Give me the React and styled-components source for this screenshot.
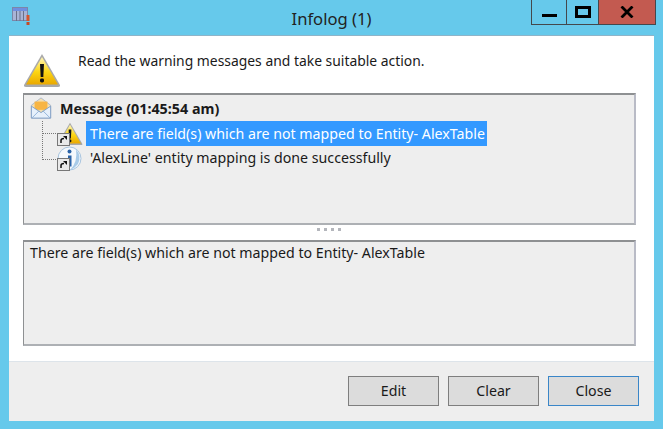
import React from "react";
import styled, { createGlobalStyle } from "styled-components";

const GlobalStyle = createGlobalStyle`
  html, body {
    margin: 0;
    padding: 0;
    background: #66c9eb;
  }
  body {
    font-family: "Noto Sans", "Open Sans", sans-serif;
    color: #1a1a1a;
  }
`;

const Frame = styled.div`
  width: 663px;
  height: 429px;
  box-sizing: border-box;
  padding: 0 9px 8px;
  display: flex;
  flex-direction: column;
  background: #66c9eb;
  overflow: hidden;
`;

const TitleBar = styled.div`
  height: 36px;
  flex: none;
  display: flex;
  align-items: flex-start;
  position: relative;
`;

const AppIcon = styled.svg`
  width: 18px;
  height: 18px;
  margin: 7px 0 0 3px;
`;

const Title = styled.div`
  position: absolute;
  left: 0;
  right: 0;
  top: 9px;
  text-align: center;
  font-size: 16.6px;
  line-height: 20px;
  color: #222;
`;

const Controls = styled.div`
  margin-left: auto;
  margin-right: -2px;
  display: flex;
  height: 25px;
  border: solid #44484c;
  border-width: 0 1px 1px 1px;
  box-sizing: border-box;
  z-index: 1;
`;

const ControlButton = styled.div`
  width: ${({ $w }) => $w}px;
  box-sizing: border-box;
  display: flex;
  align-items: center;
  justify-content: center;
  background: ${({ $close }) => ($close ? "#c35a50" : "transparent")};
  border-left: ${({ $first }) => ($first ? "none" : "1px solid #44484c")};
`;

const Client = styled.div`
  flex: 1;
  display: flex;
  flex-direction: column;
  background: #fff;
  min-height: 0;
  box-shadow: 0 -1px 0 #8fb4c8;
`;

const Intro = styled.div`
  height: 57px;
  flex: none;
  display: flex;
  align-items: flex-start;
  padding: 17px 0 0 14px;
  box-sizing: border-box;
`;

const IntroText = styled.div`
  font-size: 13.9px;
  line-height: 20px;
  margin: -2px 0 0 17px;
`;

const Panes = styled.div`
  padding: 0 18px 0 14px;
  display: flex;
  flex-direction: column;
`;

const Pane = styled.div`
  height: ${({ $h }) => $h}px;
  box-sizing: border-box;
  background: #eeeeee;
  border-style: solid;
  border-width: 2px 2px 2px 1px;
  border-color: #8e9092 #b9bbc6 #adb0b4 #8e9092;
`;

const TreeHead = styled.div`
  display: flex;
  align-items: center;
  height: 26px;
  padding-left: 6px;
  font-size: 14.3px;
  font-weight: 700;
  gap: 8px;
`;

const TreeRow = styled.div`
  display: flex;
  align-items: center;
  height: 25px;
  padding-left: 33px;
  position: relative;
`;

const Connector = styled.span`
  position: absolute;
  left: 18px;
  top: ${({ $tall }) => ($tall ? -13 : 0)}px;
  height: ${({ $tall }) => ($tall ? 26 : 12)}px;
  width: 15px;
  border-left: 1px dotted #777;
  border-bottom: 1px dotted #777;
`;

const IconSlot = styled.span`
  position: relative;
  width: 28px;
  height: 25px;
  flex: none;
  display: flex;
  align-items: center;
`;

const ShortcutBadge = styled.span`
  position: absolute;
  left: 0;
  bottom: 0;
  width: 13px;
  height: 13px;
  box-sizing: border-box;
  background: #e9e9e9;
  border: 1px solid #777;
  display: flex;
  align-items: center;
  justify-content: center;
`;

const RowLabel = styled.span`
  margin-left: 1px;
  padding: 0 2px 0 4px;
  line-height: ${({ $selected }) => ($selected ? 25 : 23)}px;
  height: 25px;
  font-size: 14.2px;
  background: ${({ $selected }) => ($selected ? "#3399ff" : "transparent")};
  color: ${({ $selected }) => ($selected ? "#fff" : "#1a1a1a")};
`;

const Splitter = styled.div`
  height: 15px;
  display: flex;
  align-items: flex-start;
  justify-content: center;
  gap: 4px;
  padding: 3px 2px 0 0;
  box-sizing: border-box;
`;

const SplitDot = styled.span`
  width: 3px;
  height: 3px;
  background: #b4b6bc;
`;

const DetailText = styled.div`
  font-size: 14.2px;
  line-height: 20px;
  padding: 1px 0 0 6px;
`;

const Footer = styled.div`
  margin-top: auto;
  height: 60px;
  box-sizing: border-box;
  background: #eeeeee;
  border-top: 1px solid #dde4ea;
  display: flex;
  justify-content: flex-end;
  gap: 9px;
  padding: 14px 15px 0 0;
`;

const Button = styled.div`
  width: 91px;
  height: 30px;
  box-sizing: border-box;
  display: flex;
  align-items: center;
  justify-content: center;
  padding-bottom: 2px;
  font-size: 14.2px;
  background: #dcdcdc;
  border: 1px solid ${({ $primary }) => ($primary ? "#3a86c8" : "#7e7e7e")};
`;

const WarningIcon = ({ size = 38, id = "warnFill" }) => (
  <svg width={size} height={size * 0.92} viewBox="0 0 38 35">
    <defs>
      <linearGradient id={id} x1="0" y1="0" x2="0" y2="1">
        <stop offset="0" stopColor="#fff6b8" />
        <stop offset="0.55" stopColor="#fcd512" />
        <stop offset="1" stopColor="#eaa800" />
      </linearGradient>
    </defs>
    <path d="M19 1 L37 32 Q37.500 34 35 34 L3 34 Q0.500 34 1 32 Z" fill="#a9a9a9" />
    <path d="M19 4 L35 31.500 L3 31.500 Z" fill={`url(#${id})`} />
    <path d="M17 11 L21 11 L20.300 24 L17.700 24 Z" fill="#111" />
    <rect x="17" y="25.500" width="4" height="4" rx="1.500" fill="#111" />
  </svg>
);

const InfoIcon = () => (
  <svg width="25" height="25" viewBox="0 0 25 25">
    <circle cx="12.500" cy="12.500" r="11.500" fill="#f5f9fd" stroke="#a8c4de" />
    <path d="M19 3.500 Q25 10 21 18 Q18 22 13 24 Q21 16 19 3.500" fill="#a9cbe8" />
    <circle cx="12.500" cy="5.500" r="2" fill="#2a63a8" />
    <rect x="11" y="9.500" width="3.500" height="11" fill="#2a63a8" />
  </svg>
);

const EnvelopeIcon = () => (
  <svg width="22" height="22" viewBox="0 0 24 24">
    <path d="M1.500 9 L12 1 L22.500 9 L22.500 23 L1.500 23 Z" fill="#f5dfae" stroke="#a9b6c8" />
    <rect x="5" y="5" width="14" height="9" fill="#f7b544" />
    <path d="M1.500 10 L12 17 L22.500 10 L22.500 23 L1.500 23 Z" fill="#e6f0fb" stroke="#7f9ec4" />
    <path d="M2 23 L10 15 M22 23 L14 15" stroke="#8fb0d8" />
  </svg>
);

const ShortcutArrow = () => (
  <svg width="9" height="9" viewBox="0 0 9 9">
    <path d="M2 8 L2 5.500 Q2 3.500 5 3.500" fill="none" stroke="#111" strokeWidth="1.500" />
    <path d="M4 1 L8 1 L8 5 Z" fill="#111" />
  </svg>
);

const App = () => {
  return (
    <>
      <GlobalStyle />
      <Frame>
        <TitleBar>
          <AppIcon viewBox="0 0 18 18">
            <rect x="0.500" y="0.500" width="15" height="13" fill="#a9b4d6" stroke="#7c86a8" />
            <rect x="1" y="1" width="14" height="3" fill="#6f8fe0" />
            <path d="M4.500 4 V14 M8 4 V14 M11.500 4 V14" stroke="#6a7088" />
            <rect x="14.500" y="8" width="3" height="6" fill="#d9542b" />
            <rect x="14.500" y="15" width="3" height="3" fill="#c44a26" />
          </AppIcon>
          <Title>Infolog (1)</Title>
          <Controls>
            <ControlButton $w={34} $first>
              <svg width="15" height="12" viewBox="0 0 15 12">
                <rect x="0" y="8" width="15" height="3" fill="#000" />
              </svg>
            </ControlButton>
            <ControlButton $w={32}>
              <svg width="16" height="12" viewBox="0 0 16 12">
                <path fillRule="evenodd" d="M0 0 H16 V12 H0 Z M3 3 V9 H13 V3 Z" fill="#000" />
              </svg>
            </ControlButton>
            <ControlButton $w={57} $close>
              <svg width="14" height="12" viewBox="0 0 14 12">
                <path d="M1.500 0.500 L12.500 11.500 M12.500 0.500 L1.500 11.500" stroke="#000" strokeWidth="2.800" />
              </svg>
            </ControlButton>
          </Controls>
        </TitleBar>
        <Client>
          <Intro>
            <WarningIcon />
            <IntroText>Read the warning messages and take suitable action.</IntroText>
          </Intro>
          <Panes>
            <Pane $h={132}>
              <TreeHead>
                <EnvelopeIcon />
                Message (01:45:54 am)
              </TreeHead>
              <TreeRow>
                <Connector />
                <IconSlot>
                  <WarningIcon size={26} id="warnFillSmall" />
                  <ShortcutBadge><ShortcutArrow /></ShortcutBadge>
                </IconSlot>
                <RowLabel $selected>There are field(s) which are not mapped to Entity- AlexTable</RowLabel>
              </TreeRow>
              <TreeRow>
                <Connector $tall />
                <IconSlot>
                  <InfoIcon />
                  <ShortcutBadge><ShortcutArrow /></ShortcutBadge>
                </IconSlot>
                <RowLabel>'AlexLine' entity mapping is done successfully</RowLabel>
              </TreeRow>
            </Pane>
            <Splitter>
              <SplitDot />
              <SplitDot />
              <SplitDot />
              <SplitDot />
            </Splitter>
            <Pane $h={106}>
              <DetailText>There are field(s) which are not mapped to Entity- AlexTable</DetailText>
            </Pane>
          </Panes>
          <Footer>
            <Button>Edit</Button>
            <Button>Clear</Button>
            <Button $primary>Close</Button>
          </Footer>
        </Client>
      </Frame>
    </>
  );
};

export default App;
